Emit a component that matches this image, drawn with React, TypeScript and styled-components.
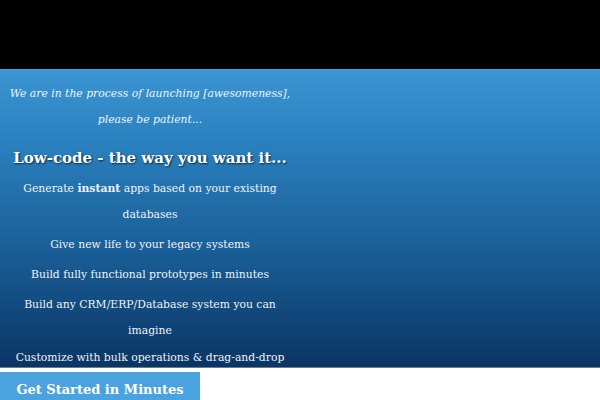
import React from "react";
import styled, { createGlobalStyle } from "styled-components";

const Global = createGlobalStyle`
  html, body { margin: 0; padding: 0; background: #fff; }
  body { font-family: "DejaVu Serif", serif; overflow: hidden; }
`;

const Page = styled.div`
  width: 600px;
  height: 400px;
  display: flex;
  flex-direction: column;
  overflow: hidden;
`;

const TopBar = styled.div`
  height: 69px;
  background: #000;
  flex: none;
`;

const Hero = styled.section`
  height: 299px;
  flex: none;
  box-sizing: border-box;
  background: linear-gradient(to bottom, #4a9fe0 0px, #3b95d2 2px, #2a80be 25%, #1a5f98 60%, #0a3564 100%);
  border-bottom: 1px solid #6a7d90;
  overflow: hidden;
`;

const Column = styled.div`
  width: 300px;
  display: flex;
  flex-direction: column;
  align-items: center;
  text-align: center;
  color: #eef3f8;
  padding-top: 12px;
`;

const Intro = styled.p`
  margin: 0;
  font-style: italic;
  font-size: 10.8px;
  line-height: 26px;
`;

const Headline = styled.h1`
  margin: 12px 0 5px;
  font-size: 15px;
  font-weight: bold;
  line-height: 26px;
  color: #fff;
  text-shadow: 1px 1px 2px rgba(0, 0, 0, 0.7);
`;

const Feature = styled.p<{ $gap: number }>`
  margin: ${(p) => p.$gap}px 0 0;
  font-size: 10.8px;
  line-height: 26px;
  padding: 0 12px;
`;

const Footer = styled.div`
  padding-top: 4px;
  display: flex;
`;

const Button = styled.button`
  width: 200px;
  height: 34px;
  border: none;
  background: #4aa2de;
  color: #fff;
  font-family: "DejaVu Serif", serif;
  font-weight: bold;
  font-size: 13px;
  text-align: center;
  padding: 0;
`;

export default function App() {
  return (
    <>
      <Global />
      <Page>
        <TopBar />
        <Hero>
          <Column>
            <Intro>
              We are in the process of launching [awesomeness],
              <br />
              please be patient...
            </Intro>
            <Headline>Low-code - the way you want it...</Headline>
            <Feature $gap={0}>
              Generate <b>instant</b> apps based on your existing databases
            </Feature>
            <Feature $gap={4}>Give new life to your legacy systems</Feature>
            <Feature $gap={4}>Build fully functional prototypes in minutes</Feature>
            <Feature $gap={4}>Build any CRM/ERP/Database system you can imagine</Feature>
            <Feature $gap={1}>Customize with bulk operations &amp; drag-and-drop</Feature>
          </Column>
        </Hero>
        <Footer>
          <Button>Get Started in Minutes</Button>
        </Footer>
      </Page>
    </>
  );
}
